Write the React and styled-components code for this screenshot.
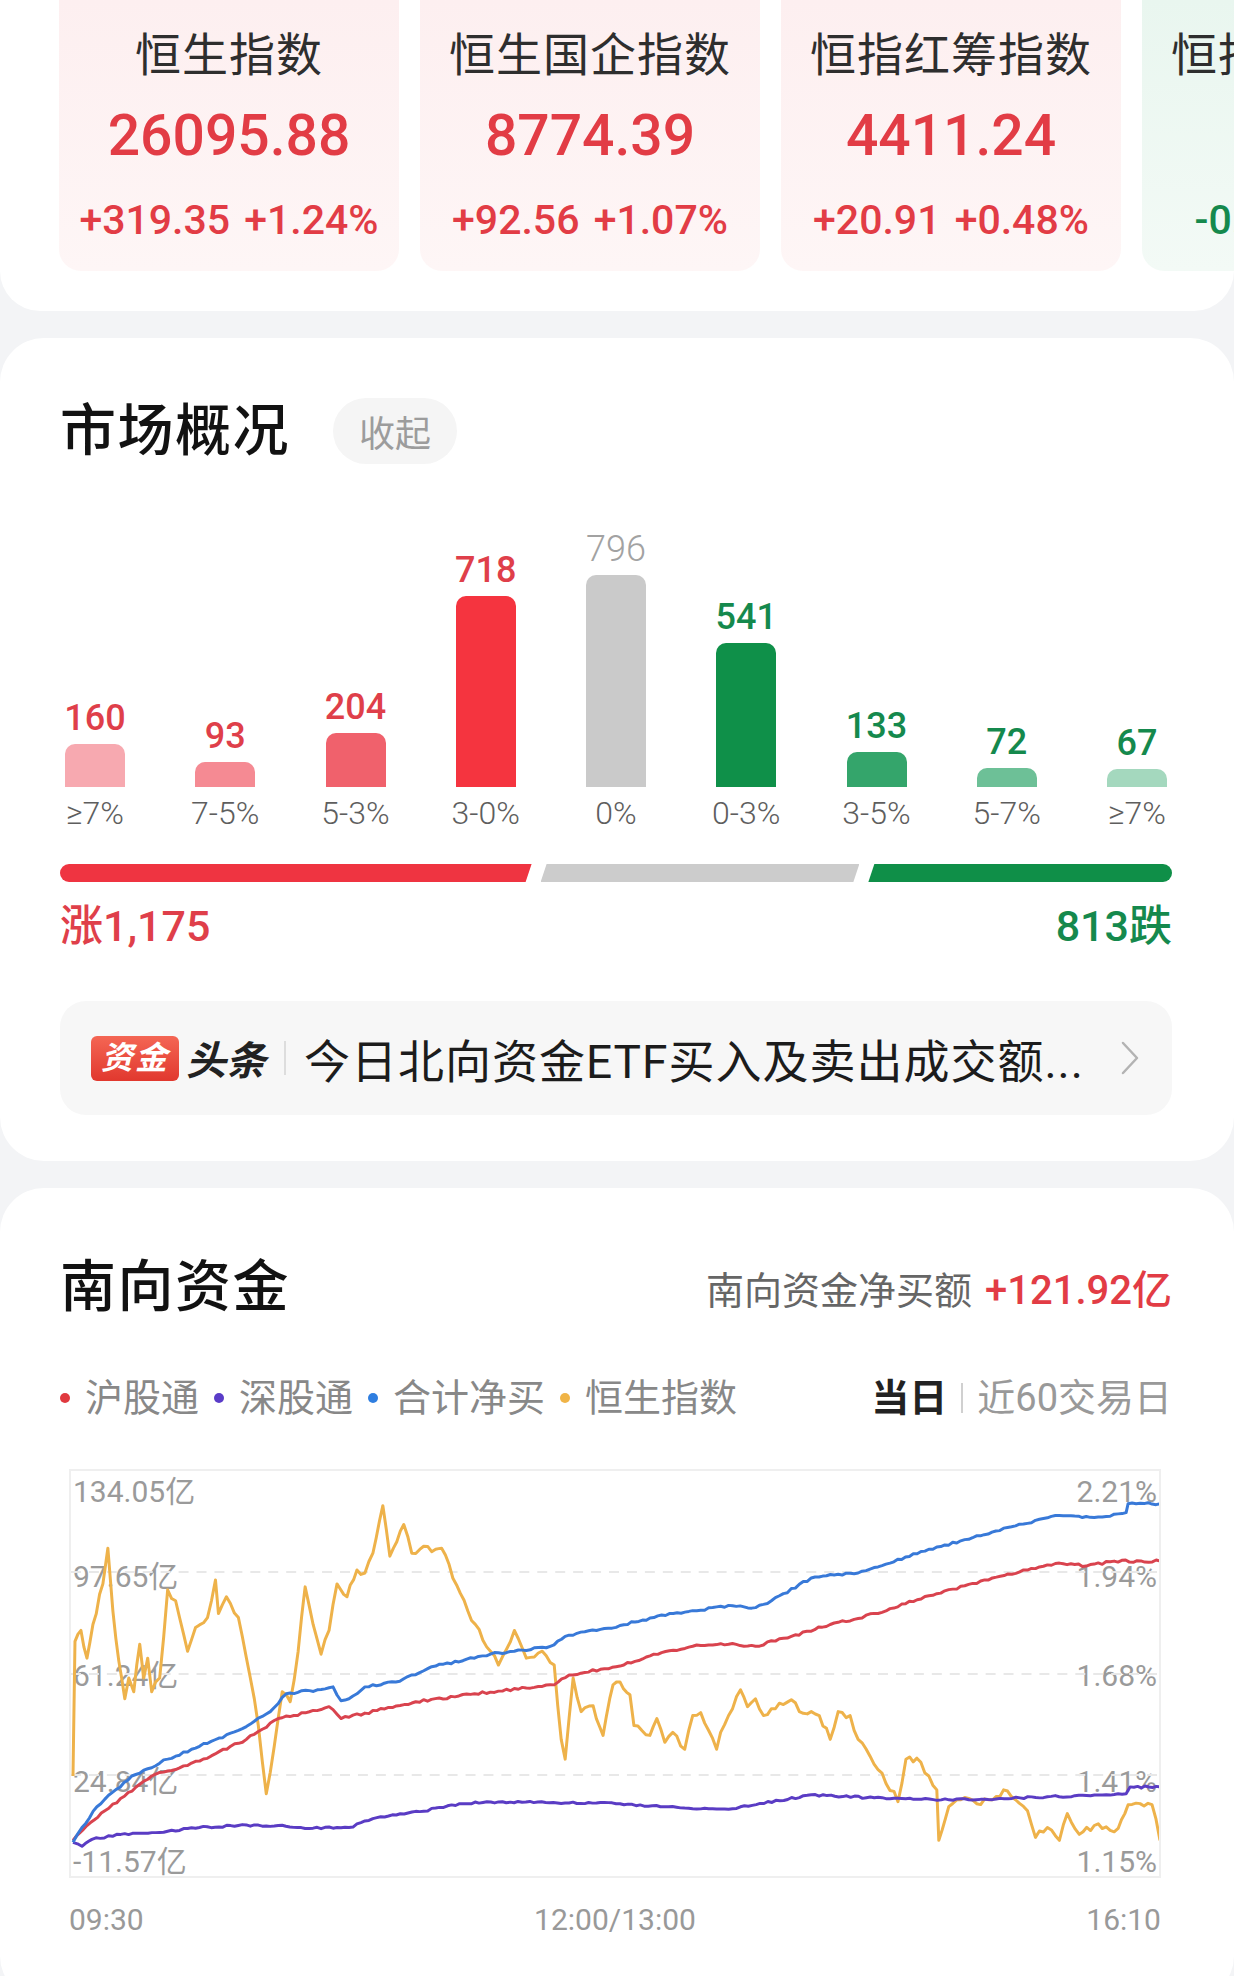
import React from 'react';
import styled, { createGlobalStyle } from 'styled-components';

const RED = '#e23c45';
const GREEN = '#15894d';

const GlobalStyle = createGlobalStyle`
  * { box-sizing: border-box; }
  html, body { margin: 0; padding: 0; background: #f3f4f6; }
  body {
    font-family: Roboto, "Noto Sans CJK SC", "DejaVu Sans", sans-serif;
    -webkit-font-smoothing: antialiased;
  }
`;

const Page = styled.div`
  width: 1234px;
  height: 1976px;
  overflow: hidden;
  background: #f3f4f6;
`;

const Card = styled.section`
  background: #fff;
  border-radius: 44px;
  margin-top: 27px;
  overflow: hidden;
`;

/* ---------- index tiles ---------- */

const IndexStrip = styled.div`
  display: flex;
  gap: 21px;
  padding: 0 0 40px 59px;
  background: #fff;
  border-radius: 0 0 40px 40px;
  overflow: hidden;
`;

const Tile = styled.div`
  flex: 0 0 340px;
  height: 271px;
  border-radius: 0 0 22px 22px;
  background: ${p => (p.$down
    ? 'linear-gradient(180deg, #e9f6ef 0%, #f3faf6 100%)'
    : 'linear-gradient(180deg, #fdeff0 0%, #fef6f6 100%)')};
  display: flex;
  flex-direction: column;
  align-items: center;
  padding-top: 25px;
  white-space: nowrap;
`;

const TileName = styled.div`
  font-size: 46px;
  line-height: 60px;
  letter-spacing: 1px;
  color: #2e2e2e;
`;

const TileValue = styled.div`
  margin-top: 16px;
  font-size: 57px;
  line-height: 70px;
  font-weight: 500;
  color: ${p => p.$color};
`;

const TileChange = styled.div`
  margin-top: 24px;
  font-size: 41px;
  line-height: 50px;
  font-weight: 500;
  word-spacing: 4px;
  color: ${p => p.$color};
`;

/* ---------- section header ---------- */

const Section = styled(Card)`
  padding: ${p => p.$pad};
`;

const HeadRow = styled.div`
  display: flex;
  align-items: center;
  height: 66px;
  gap: 43px;
`;

const Title = styled.h2`
  margin: 0;
  font-size: 56px;
  line-height: 66px;
  font-weight: 500;
  letter-spacing: 1.5px;
  color: #121212;
`;

const Pill = styled.button`
  height: 66px;
  padding: 0 26px;
  border: 0;
  border-radius: 33px;
  background: #f5f5f5;
  color: #9c9c9c;
  font-family: inherit;
  font-size: 36px;
`;

/* ---------- distribution bars ---------- */

const Bars = styled.div`
  height: 369px;
  display: flex;
  justify-content: space-between;
  align-items: flex-end;
`;

const Column = styled.div`
  width: 70px;
  display: flex;
  flex-direction: column;
  align-items: center;
`;

const Count = styled.div`
  font-size: 36px;
  line-height: 40px;
  font-weight: ${p => (p.$flat ? 300 : 500)};
  color: ${p => p.$color};
  margin-bottom: 6px;
`;

const Bar = styled.div`
  width: 60px;
  height: ${p => p.$h}px;
  border-radius: 10px 10px 0 0;
  background: ${p => p.$color};
`;

const Range = styled.div`
  margin-top: 6px;
  font-size: 32px;
  line-height: 40px;
  font-weight: 300;
  color: #5e5e5e;
  white-space: nowrap;
`;

const Split = styled.div`
  margin-top: 31px;
  height: 18px;
  display: flex;
  gap: 9px;
`;

const Segment = styled.div`
  flex: ${p => p.$grow} 1 0;
  background: ${p => p.$color};
  border-radius: ${p => p.$radius};
  clip-path: ${p => p.$clip};
`;

const Tally = styled.div`
  margin-top: 19px;
  display: flex;
  justify-content: space-between;
  font-size: 43px;
  line-height: 50px;
  font-weight: 500;
`;

const TallyText = styled.span`
  color: ${p => p.$color};
`;

/* ---------- news strip ---------- */

const News = styled.div`
  margin-top: 50px;
  height: 114px;
  border-radius: 26px;
  background: #f7f7f7;
  display: flex;
  align-items: center;
  padding: 0 32px 0 31px;
`;

const Badge = styled.span`
  height: 45px;
  padding: 0 10px;
  border-radius: 6px;
  background: linear-gradient(180deg, #f46654 0%, #e1382e 100%);
  color: #fff;
  font-size: 32px;
  font-weight: 700;
  font-style: italic;
  line-height: 45px;
  letter-spacing: 2px;
`;

const BadgeTail = styled.span`
  margin-left: 7px;
  font-size: 40px;
  font-weight: 700;
  font-style: italic;
  color: #222;
`;

const VBar = styled.span`
  width: 2px;
  height: ${p => p.$h}px;
  margin: 0 ${p => p.$gap}px;
  background: ${p => p.$color};
  flex: none;
`;

const Headline = styled.span`
  flex: 1;
  font-size: 46px;
  letter-spacing: 1px;
  color: #1c1c1c;
  white-space: nowrap;
  overflow: hidden;
`;

/* ---------- southbound ---------- */

const Summary = styled.div`
  margin-left: auto;
  display: flex;
  align-items: baseline;
  gap: 13px;
  font-size: 38px;
  color: #666;
`;

const SummaryValue = styled.span`
  font-size: 40px;
  font-weight: 500;
  color: ${RED};
`;

const LegendRow = styled.div`
  margin-top: 53px;
  display: flex;
  align-items: center;
  line-height: 50px;
  font-size: 38px;
`;

const LegendItem = styled.span`
  display: inline-flex;
  align-items: center;
  color: #888;
  margin-right: 15px;
`;

const Dot = styled.i`
  width: 10px;
  height: 10px;
  border-radius: 50%;
  background: ${p => p.$color};
  margin-right: 15px;
`;

const Tabs = styled.div`
  margin-left: auto;
  display: flex;
  align-items: center;
`;

const Tab = styled.span`
  color: ${p => (p.$active ? '#222' : '#999')};
  font-weight: ${p => (p.$active ? 700 : 400)};
`;

const ChartBox = styled.div`
  position: relative;
  margin: 46px 11px 0 9px;
  height: 409px;
  border: 2px solid #efefef;
`;

const AxisLabel = styled.span`
  position: absolute;
  top: ${p => p.$y}px;
  ${p => (p.$right ? 'right: 2px;' : 'left: 2px;')}
  transform: translateY(-50%);
  font-size: 30px;
  line-height: 36px;
  color: #9a9a9a;
`;

const Plot = styled.svg`
  position: relative;
  display: block;
  width: 100%;
  height: 100%;
`;

const TimeAxis = styled.div`
  margin: 22px 11px 0 9px;
  display: flex;
  justify-content: space-between;
  font-size: 30px;
  line-height: 40px;
  color: #999;
`;

/* ---------- data ---------- */

const indices = [
  { name: '恒生指数', value: '26095.88', change: '+319.35 +1.24%' },
  { name: '恒生国企指数', value: '8774.39', change: '+92.56 +1.07%' },
  { name: '恒指红筹指数', value: '4411.24', change: '+20.91 +0.48%' },
  { name: '恒指科技指数', value: '', change: '-0.39 -0.22%', down: true },
];

const bins = [
  { range: '≥7%', n: 160, color: '#f7a9b0', text: '#df3f4a' },
  { range: '7-5%', n: 93, color: '#f58a93', text: '#df3f4a' },
  { range: '5-3%', n: 204, color: '#f0616c', text: '#df3f4a' },
  { range: '3-0%', n: 718, color: '#f5343f', text: '#df3f4a' },
  { range: '0%', n: 796, color: '#cacaca', text: '#a2a2a2', flat: true },
  { range: '0-3%', n: 541, color: '#0f9049', text: GREEN },
  { range: '3-5%', n: 133, color: '#34a56b', text: GREEN },
  { range: '5-7%', n: 72, color: '#6dc097', text: GREEN },
  { range: '≥7%', n: 67, color: '#a4d8be', text: GREEN },
];

const legend = [
  { label: '沪股通', color: '#e0393f' },
  { label: '深股通', color: '#5a3cc8' },
  { label: '合计净买', color: '#2f7ee0' },
  { label: '恒生指数', color: '#f0b447' },
];

const leftTicks = [['134.05亿', 21], ['97.65亿', 106], ['61.24亿', 205], ['24.84亿', 311], ['-11.57亿', 391]];
const rightTicks = [['2.21%', 21], ['1.94%', 106], ['1.68%', 205], ['1.41%', 311], ['1.15%', 391]];

const orange = [[71,1778],[73,1642],[79,1631],[85,1659],[91,1625],[101,1584],[106,1548],[111,1611],[117,1662],[123,1700],[127,1679],[132,1693],[138,1645],[142,1679],[146,1659],[150,1693],[158,1679],[166,1590],[174,1601],[186,1652],[194,1628],[206,1618],[214,1580],[217,1614],[225,1597],[237,1618],[249,1679],[257,1727],[265,1796],[273,1748],[281,1693],[289,1703],[297,1652],[304,1587],[312,1625],[320,1655],[328,1631],[336,1584],[346,1597],[356,1570],[364,1573],[372,1553],[382,1505],[389,1556],[403,1524],[411,1553],[423,1546],[435,1549],[441,1548],[471,1621],[490,1652],[498,1666],[514,1631],[526,1659],[542,1652],[554,1666],[561,1741],[565,1761],[573,1679],[581,1713],[593,1707],[603,1737],[613,1686],[620,1683],[630,1696],[634,1727],[650,1737],[657,1720],[665,1744],[673,1734],[685,1751],[693,1717],[701,1714],[717,1751],[721,1734],[733,1710],[741,1691],[748,1708],[756,1700],[764,1717],[772,1710],[792,1701],[800,1713],[812,1713],[820,1717],[831,1741],[839,1713],[851,1717],[859,1741],[871,1758],[883,1775],[899,1804],[907,1761],[918,1760],[930,1778],[938,1792],[940,1843],[950,1809],[962,1802],[978,1806],[994,1802],[1005,1792],[1017,1802],[1029,1813],[1037,1840],[1049,1830],[1061,1843],[1069,1816],[1081,1837],[1096,1828],[1112,1833],[1120,1831],[1130,1807],[1154,1807],[1162,1843]];
const blue = [[71,1845],[80,1830],[95,1809],[130,1778],[166,1761],[198,1748],[237,1732],[269,1713],[285,1695],[324,1690],[332,1688],[340,1702],[348,1700],[364,1688],[395,1683],[411,1676],[435,1667],[474,1659],[490,1655],[514,1652],[550,1647],[565,1637],[620,1626],[654,1618],[693,1611],[733,1606],[756,1608],[772,1601],[812,1578],[835,1575],[859,1573],[891,1563],[930,1549],[970,1539],[1009,1527],[1061,1515],[1088,1516],[1108,1516],[1128,1512],[1130,1503],[1162,1503]];
const red = [[71,1843],[85,1828],[103,1813],[150,1778],[198,1763],[245,1741],[277,1720],[316,1712],[328,1708],[340,1720],[376,1712],[415,1703],[474,1695],[554,1686],[569,1676],[620,1667],[654,1655],[693,1647],[729,1645],[756,1647],[792,1637],[831,1625],[859,1619],[891,1609],[930,1596],[990,1580],[1029,1570],[1061,1563],[1088,1566],[1116,1561],[1162,1561]];
const purple = [[71,1845],[80,1849],[90,1842],[119,1837],[158,1835],[198,1830],[237,1828],[277,1828],[304,1831],[348,1830],[376,1820],[419,1814],[459,1806],[502,1804],[620,1806],[693,1811],[733,1811],[812,1797],[891,1801],[970,1802],[1049,1799],[1108,1797],[1128,1796],[1132,1789],[1162,1789]];

function rng(seed) {
  let s = seed;
  return () => {
    s = (s * 1664525 + 1013904223) % 4294967296;
    return s / 4294967296;
  };
}

// interpolate the traced points and add a little noise so it reads like tick data
function tracePath(pts, amp, step, seed) {
  const r = rng(seed);
  let d = `M${pts[0][0]} ${pts[0][1]}`;
  for (let i = 1; i < pts.length; i++) {
    const [x0, y0] = pts[i - 1];
    const [x1, y1] = pts[i];
    const n = Math.max(1, Math.round((x1 - x0) / step));
    for (let k = 1; k <= n; k++) {
      const t = k / n;
      let y = y0 + (y1 - y0) * t;
      if (k < n) y += (r() - 0.5) * 2 * amp;
      d += `L${(x0 + (x1 - x0) * t).toFixed(1)} ${y.toFixed(1)}`;
    }
  }
  return d;
}

const series = [
  { d: tracePath(orange, 3.5, 4, 7), color: '#eeb24a' },
  { d: tracePath(purple, 1, 4, 11), color: '#5a3cc4' },
  { d: tracePath(red, 1.2, 4, 23), color: '#d9434e' },
  { d: tracePath(blue, 1.2, 4, 41), color: '#3879d8' },
];

function Chevron() {
  return (
    <svg width="20" height="36" viewBox="0 0 20 36" fill="none">
      <polyline points="3,3 17,18 3,33" stroke="#b3b3b3" strokeWidth="2.5" strokeLinecap="round" strokeLinejoin="round" />
    </svg>
  );
}

function App() {
  return (
    <Page>
      <GlobalStyle />

      <IndexStrip>
        {indices.map(item => (
          <Tile key={item.name} $down={item.down}>
            <TileName>{item.name}</TileName>
            <TileValue $color={item.down ? GREEN : RED}>{item.value || '\u00a0'}</TileValue>
            <TileChange $color={item.down ? GREEN : RED}>{item.change}</TileChange>
          </Tile>
        ))}
      </IndexStrip>

      <Section $pad="60px 62px 46px 60px">
        <HeadRow>
          <Title>市场概况</Title>
          <Pill>收起</Pill>
        </HeadRow>

        <Bars>
          {bins.map((b, i) => (
            <Column key={i}>
              <Count $color={b.text} $flat={b.flat}>{b.n}</Count>
              <Bar $h={Math.round(b.n * 0.266)} $color={b.color} />
              <Range>{b.range}</Range>
            </Column>
          ))}
        </Bars>

        <Split>
          <Segment
            $grow={469}
            $color="#ef3441"
            $radius="9px 0 0 9px"
            $clip="polygon(0 0, 100% 0, calc(100% - 6px) 100%, 0 100%)"
          />
          <Segment
            $grow={317}
            $color="#cccccc"
            $radius="0"
            $clip="polygon(6px 0, 100% 0, calc(100% - 6px) 100%, 0 100%)"
          />
          <Segment
            $grow={302}
            $color="#0f8f48"
            $radius="0 9px 9px 0"
            $clip="polygon(6px 0, 100% 0, 100% 100%, 0 100%)"
          />
        </Split>

        <Tally>
          <TallyText $color="#df3f4a">涨1,175</TallyText>
          <TallyText $color={GREEN}>813跌</TallyText>
        </Tally>

        <News>
          <Badge>资金</Badge>
          <BadgeTail>头条</BadgeTail>
          <VBar $h={34} $gap={18} $color="#dddddd" />
          <Headline>今日北向资金ETF买入及卖出成交额...</Headline>
          <Chevron />
        </News>
      </Section>

      <Section $pad="66px 62px 60px 60px">
        <HeadRow>
          <Title>南向资金</Title>
          <Summary>
            南向资金净买额
            <SummaryValue>+121.92亿</SummaryValue>
          </Summary>
        </HeadRow>

        <LegendRow>
          {legend.map(l => (
            <LegendItem key={l.label}>
              <Dot $color={l.color} />
              {l.label}
            </LegendItem>
          ))}
          <Tabs>
            <Tab $active>当日</Tab>
            <VBar $h={30} $gap={14} $color="#d0d0d0" />
            <Tab>近60交易日</Tab>
          </Tabs>
        </LegendRow>

        <ChartBox>
          {leftTicks.map(([t, y]) => (
            <AxisLabel key={t} $y={y}>{t}</AxisLabel>
          ))}
          {rightTicks.map(([t, y]) => (
            <AxisLabel key={t} $y={y} $right>{t}</AxisLabel>
          ))}
          <Plot viewBox="69 1470 1092 409" preserveAspectRatio="none">
            {[1572, 1675, 1777].map(y => (
              <line key={y} x1="69" x2="1161" y1={y} y2={y} stroke="#e8e8e8" strokeWidth="2" strokeDasharray="10 8" />
            ))}
            {series.map(s => (
              <path key={s.color} d={s.d} fill="none" stroke={s.color} strokeWidth="3" strokeLinejoin="round" />
            ))}
          </Plot>
        </ChartBox>

        <TimeAxis>
          <span>09:30</span>
          <span>12:00/13:00</span>
          <span>16:10</span>
        </TimeAxis>
      </Section>
    </Page>
  );
}

export default App;
